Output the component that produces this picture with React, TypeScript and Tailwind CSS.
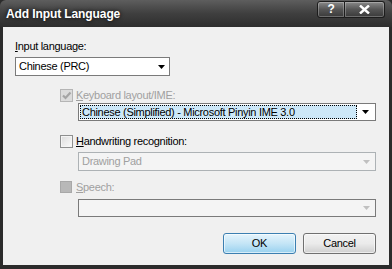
import React from "react";

const font = { fontFamily: '"Liberation Sans", Arial, sans-serif' };

function Arrow({ color = "#000" }: { color?: string }) {
  return (
    <svg width="7" height="4" viewBox="0 0 7 4">
      <path d="M0 0 H7 L3.5 4 Z" fill={color} />
    </svg>
  );
}

function Check({ color }: { color: string }) {
  return (
    <svg width="11" height="11" viewBox="0 0 11 11">
      <path d="M2 5.5 L4.5 8 L9.5 2.5" stroke={color} strokeWidth="2.2" fill="none" />
    </svg>
  );
}

export default function App() {
  return (
    <div
      className="w-[392px] h-[269px] flex flex-col bg-[#2b2b2b] text-[11px] leading-[13px] tracking-[-0.3px] text-black"
      style={font}
    >
      {/* Title bar */}
      <div className="h-[27px] flex items-start bg-gradient-to-b from-[#5e5e5e] via-[#3f3f3f] to-[#2e2e2e] rounded-t-[6px]">
        <div className="pl-[6px] pt-[7px] text-white font-bold text-[12px] leading-[14px] tracking-[-0.1px] [text-shadow:0_0_4px_#000]">
          Add Input Language
        </div>
        <div className="ml-auto mr-[7px] mt-[1px] flex">
          <div className="w-[28px] h-[17px] flex items-center justify-center rounded-l-[3px] border border-[#1c1c1c] bg-gradient-to-b from-[#8a8a8a] via-[#555] to-[#3a3a3a] shadow-[inset_0_0_0_1px_rgba(255,255,255,0.25)] text-white font-bold text-[12px]">
            ?
          </div>
          <div className="w-[40px] h-[17px] flex items-center justify-center rounded-r-[3px] border border-l-0 border-[#1c1c1c] bg-gradient-to-b from-[#8a8a8a] via-[#555] to-[#3a3a3a] shadow-[inset_0_0_0_1px_rgba(255,255,255,0.25)]">
            <svg width="11" height="9" viewBox="0 0 11 9">
              <path d="M1 0.5 L10 8.5 M10 0.5 L1 8.5" stroke="#fff" strokeWidth="2.4" />
            </svg>
          </div>
        </div>
      </div>

      {/* Body */}
      <div className="flex-1 mx-[3px] mb-[4px] bg-[#f0f0f0] flex flex-col pl-[12px] pr-[13px]">
        <div className="mt-[13px] h-[13px]">
          <span className="underline underline-offset-[1px]">I</span>nput language:
        </div>
        <div className="mt-[4px] w-[155px] h-[19px] border border-[#7a7a7a] bg-white flex items-center pl-[3px] pr-[4px]">
          <span>Chinese (PRC)</span>
          <span className="ml-auto flex"><Arrow /></span>
        </div>

        {/* Keyboard */}
        <div className="mt-[13px] ml-[45px] flex items-center h-[13px]">
          <div className="w-[13px] h-[13px] border border-[#b5b5b5] bg-[#dcdcdc] flex items-center justify-center">
            <Check color="#a5a5a5" />
          </div>
          <span className="ml-[3px] text-[#a0a0a0]">
            <span className="underline underline-offset-[1px]">K</span>eyboard layout/IME:
          </span>
        </div>
        <div className="mt-[1px] ml-[63px] h-[18px] border border-[#7a7a7a] bg-white flex items-center p-[1px]">
          <div className="flex-1 h-full bg-[#cde8f8] border border-dotted border-[#000] flex items-center pl-[1px]">
            Chinese (Simplified) - Microsoft Pinyin IME 3.0
          </div>
          <span className="w-[17px] flex justify-center"><Arrow /></span>
        </div>

        {/* Handwriting */}
        <div className="mt-[14px] ml-[45px] flex items-center h-[13px]">
          <div className="w-[13px] h-[13px] border border-[#8e8f8f] bg-gradient-to-br from-[#dcdcdc] to-[#fbfbfb] shadow-[inset_0_0_0_1px_#f4f4f4]" />
          <span className="ml-[3px]">
            <span className="underline underline-offset-[1px]">H</span>andwriting recognition:
          </span>
        </div>
        <div className="mt-[4px] ml-[63px] h-[19px] border border-[#adb2b5] bg-[#f4f4f4] flex items-center pl-[3px]">
          <span className="text-[#a0a0a0]">Drawing Pad</span>
          <span className="ml-auto w-[17px] flex justify-center"><Arrow color="#c0c0c0" /></span>
        </div>

        {/* Speech */}
        <div className="mt-[10px] ml-[45px] flex items-center h-[12px]">
          <div className="w-[12px] h-[12px] border border-[#a8a8a8] bg-[#b8b8b8]" />
          <span className="ml-[4px] text-[#a0a0a0]">
            <span className="underline underline-offset-[1px]">S</span>peech:
          </span>
        </div>
        <div className="mt-[6px] ml-[63px] h-[18px] border border-[#7a7a7a] bg-[#f4f4f4] flex items-center">
          <span className="ml-auto w-[17px] flex justify-center"><Arrow color="#c0c0c0" /></span>
        </div>

        {/* Buttons */}
        <div className="mt-[16px] flex justify-end gap-[7px]">
          <div className="w-[73px] h-[21px] rounded-[3px] border border-[#3c7fb1] bg-gradient-to-b from-[#e5f4fc] via-[#c4e5f6] to-[#98d1ef] shadow-[inset_0_0_0_1px_rgba(255,255,255,0.6)] flex items-center justify-center">
            OK
          </div>
          <div className="w-[73px] h-[21px] rounded-[3px] border border-[#707070] bg-gradient-to-b from-[#f2f2f2] via-[#ebebeb] to-[#cfcfcf] shadow-[inset_0_0_0_1px_rgba(255,255,255,0.6)] flex items-center justify-center">
            Cancel
          </div>
        </div>
      </div>
    </div>
  );
}
